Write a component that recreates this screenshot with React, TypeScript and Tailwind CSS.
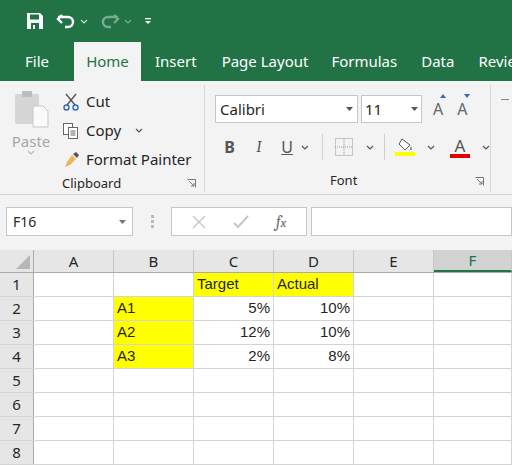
import React from "react";

const F = { fontFamily: '"Noto Sans","Open Sans",sans-serif' };
const cols = ["A", "B", "C", "D", "E", "F"];
const widths = [80, 80, 80, 80, 80, 78];
type Cell = { t?: string; y?: boolean; r?: boolean };
const data: Cell[][] = [
  [{}, {}, { t: "Target", y: true }, { t: "Actual", y: true }, {}, {}],
  [{}, { t: "A1", y: true }, { t: "5%", r: true }, { t: "10%", r: true }, {}, {}],
  [{}, { t: "A2", y: true }, { t: "12%", r: true }, { t: "10%", r: true }, {}, {}],
  [{}, { t: "A3", y: true }, { t: "2%", r: true }, { t: "8%", r: true }, {}, {}],
  [{}, {}, {}, {}, {}, {}],
  [{}, {}, {}, {}, {}, {}],
  [{}, {}, {}, {}, {}, {}],
  [{}, {}, {}, {}, {}, {}],
];

const Chev = ({ c = "#555" }: { c?: string }) => (
  <svg width="8" height="5" viewBox="0 0 8 5"><path d="M1 1l3 3 3-3" stroke={c} fill="none" strokeWidth="1.2" /></svg>
);

export default function App() {
  return (
    <div className="w-[512px] h-[465px] overflow-hidden bg-white text-[#262626]" style={F}>
      {/* QAT */}
      <div className="h-[42px] bg-[#217346] flex items-center gap-3 pl-[26px] text-white">
        <svg width="18" height="18" viewBox="0 0 18 18"><path d="M1 1h13l3 3v13H1z" fill="white" /><rect x="4" y="2.5" width="9" height="5" fill="#217346" /><rect x="5" y="11" width="8" height="6" fill="#217346" /><rect x="7" y="13" width="2" height="4" fill="white" /></svg>
        <div className="flex items-center gap-1">
          <svg width="20" height="16" viewBox="0 0 20 16"><path d="M6 2L2 6l4 4" stroke="white" strokeWidth="2.4" fill="none" /><path d="M2 6h10a5 5 0 0 1 0 10h-3" stroke="white" strokeWidth="2.4" fill="none" transform="translate(0,-2)" /></svg>
          <Chev c="#cfe3d6" />
        </div>
        <div className="flex items-center gap-1 opacity-40">
          <svg width="20" height="16" viewBox="0 0 20 16"><g transform="scale(-1,1) translate(-20,0)"><path d="M6 2L2 6l4 4" stroke="white" strokeWidth="2.4" fill="none" /><path d="M2 6h10a5 5 0 0 1 0 10h-3" stroke="white" strokeWidth="2.4" fill="none" transform="translate(0,-2)" /></g></svg>
          <Chev c="#fff" />
        </div>
        <svg width="8" height="10" viewBox="0 0 8 10"><rect x="1" y="2" width="6" height="1.3" fill="white" /><path d="M1 5h6l-3 3z" fill="white" /></svg>
      </div>
      {/* Tabs */}
      <div className="h-[39px] bg-[#217346] flex items-end text-white text-[15px] whitespace-nowrap">
        <div className="px-[25px] h-full flex items-center">File</div>
        <div className="w-[67px] shrink-0 h-[39px] bg-[#f3f3f3] text-[#217346] flex items-center justify-center">Home</div>
        <div className="px-[14px] h-full flex items-center">Insert</div>
        <div className="px-[11px] h-full flex items-center">Page Layout</div>
        <div className="px-[12px] h-full flex items-center">Formulas</div>
        <div className="px-[12px] h-full flex items-center">Data</div>
        <div className="pl-[12px] h-full flex items-center">Review</div>
      </div>
      {/* Ribbon */}
      <div className="h-[114px] bg-[#f3f3f3] flex border-b border-[#d4d4d4] text-[14px]">
        <div className="w-[205px] flex flex-col border-r border-[#d6d6d6] mt-[4px] mb-[2px]">
          <div className="flex flex-1 pt-[2px]">
            <div className="w-[62px] flex flex-col items-center pt-[3px] text-[#a6a6a6]">
              <svg width="36" height="38" viewBox="0 0 36 38"><rect x="2" y="4" width="24" height="30" rx="2" fill="#d6d6d6" /><rect x="9" y="1" width="10" height="6" rx="1" fill="#bdbdbd" /><path d="M20 16h10l5 5v16H20z" fill="#fafafa" stroke="#c8c8c8" /></svg>
              <div className="text-[15px] leading-[18px] mt-[4px]">Paste</div>
              <Chev c="#bbb" />
            </div>
            <div className="flex flex-col text-[15px] leading-[29px]">
              <div className="flex items-center gap-[6px]">
                <svg width="18" height="18" viewBox="0 0 18 18"><path d="M4 1l9 11M14 1L5 12" stroke="#555" strokeWidth="1.4" /><circle cx="4.5" cy="14.5" r="2.5" fill="none" stroke="#2f6cb5" strokeWidth="1.4" /><circle cx="13.5" cy="14.5" r="2.5" fill="none" stroke="#2f6cb5" strokeWidth="1.4" /></svg>
                Cut
              </div>
              <div className="flex items-center gap-[6px]">
                <svg width="18" height="18" viewBox="0 0 18 18"><rect x="1.5" y="1.5" width="9" height="11" fill="white" stroke="#666" /><rect x="6.5" y="5.5" width="9" height="11" fill="white" stroke="#666" /><path d="M8.5 9h5M8.5 11h5M8.5 13h5" stroke="#666" /></svg>
                Copy <span className="ml-2"><Chev /></span>
              </div>
              <div className="flex items-center gap-[6px]">
                <svg width="18" height="18" viewBox="0 0 18 18"><path d="M10 4l4 4-6 6-5 2 2-5z" fill="#e8b860" /><path d="M11 3l3-2 3 3-2 3z" fill="#555" /></svg>
                Format Painter
              </div>
            </div>
          </div>
          <div className="flex items-center justify-between text-[13px] h-[22px]">
            <span className="ml-[62px]">Clipboard</span>
            <svg className="mr-[8px]" width="9" height="9" viewBox="0 0 9 9"><path d="M.5.5h8v8M2 2l5 5M4 7h3V4" stroke="#777" fill="none" /></svg>
          </div>
        </div>
        <div className="w-[286px] flex flex-col border-r border-[#d6d6d6] mt-[4px] mb-[2px] pl-[10px]">
          <div className="flex items-center gap-[3px] mt-[10px]">
            <div className="w-[143px] h-[28px] bg-white border border-[#c6c6c6] flex items-center justify-between px-[4px] text-[15px]">Calibri<svg width="7" height="4"><path d="M0 0h7L3.5 4z" fill="#555" /></svg></div>
            <div className="w-[61px] h-[28px] bg-white border border-[#c6c6c6] flex items-center justify-between px-[3px] text-[15px]">11<svg width="7" height="4"><path d="M0 0h7L3.5 4z" fill="#555" /></svg></div>
            <div className="flex gap-[14px] ml-[8px] text-[#666] text-[16px]">
              <span className="relative">A<svg className="absolute -top-[3px] right-[-3px]" width="6" height="4"><path d="M0 4L3 0l3 4z" fill="#2f6cb5" /></svg></span>
              <span className="relative">A<svg className="absolute -top-[3px] right-[-3px]" width="6" height="4"><path d="M0 0h6L3 4z" fill="#2f6cb5" /></svg></span>
            </div>
          </div>
          <div className="flex items-center mt-[11px] text-[16px] text-[#555] h-[26px]">
            <span className="font-bold w-[30px] text-center">B</span>
            <span className="italic font-serif w-[30px] text-center">I</span>
            <span className="underline w-[28px] text-center">U</span>
            <Chev />
            <div className="w-px h-[26px] bg-[#d0d0d0] mx-[13px]" />
            <svg width="18" height="18"><rect x=".5" y=".5" width="17" height="17" fill="none" stroke="#999" strokeDasharray="1 1" /><path d="M9 0v18M0 9h18" stroke="#999" strokeDasharray="1 1" /></svg>
            <span className="ml-[13px]"><Chev /></span>
            <div className="w-px h-[26px] bg-[#d0d0d0] mx-[10px]" />
            <div className="flex flex-col items-center">
              <svg width="16" height="14" viewBox="0 0 16 14"><path d="M5 1l8 6-5 5-6-6z" fill="white" stroke="#555" /><path d="M14 8c1 2 1 4 0 4s-1-2 0-4z" fill="#2f6cb5" /></svg>
              <div className="w-[20px] h-[4px] bg-[#ffff00]" />
            </div>
            <span className="ml-[12px]"><Chev /></span>
            <div className="flex flex-col items-center ml-[15px] leading-none">
              <span className="text-[17px] text-[#555]">A</span>
              <div className="w-[20px] h-[4px] bg-[#e00000]" />
            </div>
            <span className="ml-[12px]"><Chev /></span>
          </div>
          <div className="flex items-center justify-between text-[13px] h-[22px] mt-auto">
            <span className="ml-[115px]">Font</span>
            <svg className="mr-[6px]" width="9" height="9" viewBox="0 0 9 9"><path d="M.5.5h8v8M2 2l5 5M4 7h3V4" stroke="#777" fill="none" /></svg>
          </div>
        </div>
        <div className="flex-1 pl-[10px] pt-[18px]"><div className="w-[8px] h-px bg-[#888]" /></div>
      </div>
      {/* Formula bar */}
      <div className="h-[55px] bg-[#f3f3f3] flex items-center pl-[6px] pb-[2px]">
        <div className="w-[127px] h-[29px] bg-white border border-[#c6c6c6] flex items-center justify-between px-[6px] text-[14px]">F16<svg width="7" height="4"><path d="M0 0h7L3.5 4z" fill="#777" /></svg></div>
        <div className="w-[38px] flex flex-col items-center gap-[2px]"><div className="w-[3px] h-[3px] bg-[#bbb]" /><div className="w-[3px] h-[3px] bg-[#bbb]" /><div className="w-[3px] h-[3px] bg-[#bbb]" /></div>
        <div className="w-[136px] h-[29px] bg-white border border-[#c6c6c6] flex items-center justify-around px-[6px]">
          <svg width="14" height="14"><path d="M1 1l12 12M13 1L1 13" stroke="#c6c6c6" strokeWidth="1.4" /></svg>
          <svg width="16" height="14"><path d="M1 8l4 4 10-11" stroke="#c6c6c6" strokeWidth="2" fill="none" /></svg>
          <span className="italic font-serif text-[#666] text-[16px]">f<span className="text-[13px]">x</span></span>
        </div>
        <div className="flex-1 h-[29px] bg-white border border-[#c6c6c6] ml-[4px]" />
      </div>
      {/* Grid */}
      <div className="flex h-[23px] bg-[#e6e6e6] border-b border-[#ababab] text-[15px]">
        <div className="w-[34px] border-r border-[#ababab] flex items-end justify-end p-[3px]"><svg width="14" height="14"><path d="M14 0v14H0z" fill="#b7b7b7" /></svg></div>
        {cols.map((c, i) => (
          <div key={c} style={{ width: widths[i] }} className={`border-r border-[#c8c8c8] flex items-center justify-center ${c === "F" ? "bg-[#d2d2d2] text-[#217346] border-b-2 border-b-[#217346]" : ""}`}>{c}</div>
        ))}
      </div>
      {data.map((row, ri) => (
        <div key={ri} className="flex h-[24px] border-b border-[#d4d4d4] text-[15px]" style={{ fontFamily: '"Liberation Sans",sans-serif' }}>
          <div className="w-[34px] bg-[#e6e6e6] border-r border-[#ababab] flex items-center justify-center" style={F}>{ri + 1}</div>
          {row.map((cell, ci) => (
            <div key={ci} style={{ width: widths[ci] }} className={`border-r border-[#d4d4d4] px-[3px] flex items-center ${cell.y ? "bg-[#ffff00]" : ""} ${cell.r ? "justify-end" : ""}`}>{cell.t}</div>
          ))}
        </div>
      ))}
    </div>
  );
}
